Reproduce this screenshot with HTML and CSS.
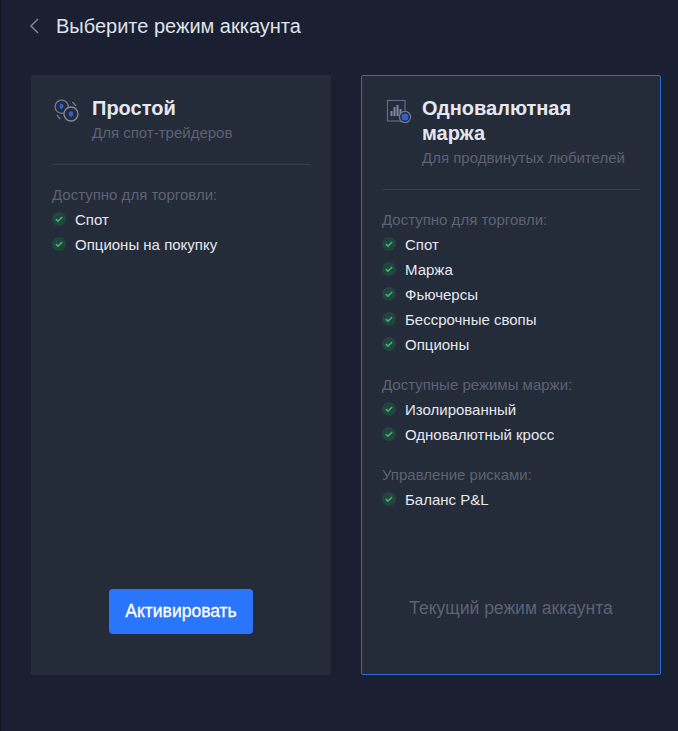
FILE: index.html
```html
<!DOCTYPE html>
<html lang="ru">
<head>
<meta charset="utf-8">
<title>Выберите режим аккаунта</title>
<link rel="stylesheet" href="styles.css">
</head>
<body>
<div class="page">
  <header class="top">
    <svg class="back" width="12" height="18" viewBox="0 0 12 18"><path d="M10 2 L3 9 L10 16" fill="none" stroke="#7d8493" stroke-width="1.5"/></svg>
    <h1 class="title">Выберите режим аккаунта</h1>
  </header>
  <main class="cards">
    <section class="card">
      <div class="head">
        <svg class="icon" width="28" height="26" viewBox="0 0 28 26" fill="none">
          <circle cx="7.7" cy="9.7" r="6.6" stroke="#6f7a98" stroke-width="1.3"/>
          <circle cx="17" cy="17" r="7" fill="#252c3a" stroke="#7f8aa8" stroke-width="1.3"/>
          <ellipse cx="7.5" cy="9.2" rx="1.9" ry="2.8" fill="#2f5fd0"/>
          <ellipse cx="17" cy="17" rx="2.2" ry="2.8" fill="#2f5fd0"/>
          <path d="M18.5 5 L22 9 M3 18 L6 22" stroke="#6f7a98" stroke-width="1.3"/>
        </svg>
        <div class="head-text">
          <h2 class="name">Простой</h2>
          <p class="desc">Для спот-трейдеров</p>
        </div>
      </div>
      <div class="body">
        <div class="group">
          <p class="label">Доступно для торговли:</p>
          <ul class="list">
            <li class="item"><svg class="check" width="14" height="14" viewBox="0 0 14 14"><circle cx="7" cy="7" r="7" fill="#23443f"/><path d="M3.8 7.1 L6 9.1 L10.2 5" fill="none" stroke="#3ab86e" stroke-width="1.5"/></svg>Спот</li>
            <li class="item"><svg class="check" width="14" height="14" viewBox="0 0 14 14"><circle cx="7" cy="7" r="7" fill="#23443f"/><path d="M3.8 7.1 L6 9.1 L10.2 5" fill="none" stroke="#3ab86e" stroke-width="1.5"/></svg>Опционы на покупку</li>
          </ul>
        </div>
      </div>
      <div class="foot"><button class="btn">Активировать</button></div>
    </section>
    <section class="card active">
      <div class="head">
        <svg class="icon" width="28" height="26" viewBox="0 0 28 26" fill="none">
          <rect x="3.5" y="3.5" width="17.5" height="20.5" stroke="#5f6a88" stroke-width="1.2"/>
          <path d="M7.5 14v5M10.5 10v9M13.5 8v11M16.5 12v7" stroke="#7f889f" stroke-width="2"/>
          <circle cx="21" cy="20" r="5.6" fill="#252c3a" stroke="#6f7a98" stroke-width="1.2"/>
          <circle cx="21" cy="20" r="3.5" fill="#2f5fd0"/>
        </svg>
        <div class="head-text">
          <h2 class="name">Одновалютная маржа</h2>
          <p class="desc">Для продвинутых любителей</p>
        </div>
      </div>
      <div class="body">
        <div class="group">
          <p class="label">Доступно для торговли:</p>
          <ul class="list">
            <li class="item"><svg class="check" width="14" height="14" viewBox="0 0 14 14"><circle cx="7" cy="7" r="7" fill="#23443f"/><path d="M3.8 7.1 L6 9.1 L10.2 5" fill="none" stroke="#3ab86e" stroke-width="1.5"/></svg>Спот</li>
            <li class="item"><svg class="check" width="14" height="14" viewBox="0 0 14 14"><circle cx="7" cy="7" r="7" fill="#23443f"/><path d="M3.8 7.1 L6 9.1 L10.2 5" fill="none" stroke="#3ab86e" stroke-width="1.5"/></svg>Маржа</li>
            <li class="item"><svg class="check" width="14" height="14" viewBox="0 0 14 14"><circle cx="7" cy="7" r="7" fill="#23443f"/><path d="M3.8 7.1 L6 9.1 L10.2 5" fill="none" stroke="#3ab86e" stroke-width="1.5"/></svg>Фьючерсы</li>
            <li class="item"><svg class="check" width="14" height="14" viewBox="0 0 14 14"><circle cx="7" cy="7" r="7" fill="#23443f"/><path d="M3.8 7.1 L6 9.1 L10.2 5" fill="none" stroke="#3ab86e" stroke-width="1.5"/></svg>Бессрочные свопы</li>
            <li class="item"><svg class="check" width="14" height="14" viewBox="0 0 14 14"><circle cx="7" cy="7" r="7" fill="#23443f"/><path d="M3.8 7.1 L6 9.1 L10.2 5" fill="none" stroke="#3ab86e" stroke-width="1.5"/></svg>Опционы</li>
          </ul>
        </div>
        <div class="group">
          <p class="label">Доступные режимы маржи:</p>
          <ul class="list">
            <li class="item"><svg class="check" width="14" height="14" viewBox="0 0 14 14"><circle cx="7" cy="7" r="7" fill="#23443f"/><path d="M3.8 7.1 L6 9.1 L10.2 5" fill="none" stroke="#3ab86e" stroke-width="1.5"/></svg>Изолированный</li>
            <li class="item"><svg class="check" width="14" height="14" viewBox="0 0 14 14"><circle cx="7" cy="7" r="7" fill="#23443f"/><path d="M3.8 7.1 L6 9.1 L10.2 5" fill="none" stroke="#3ab86e" stroke-width="1.5"/></svg>Одновалютный кросс</li>
          </ul>
        </div>
        <div class="group">
          <p class="label">Управление рисками:</p>
          <ul class="list">
            <li class="item"><svg class="check" width="14" height="14" viewBox="0 0 14 14"><circle cx="7" cy="7" r="7" fill="#23443f"/><path d="M3.8 7.1 L6 9.1 L10.2 5" fill="none" stroke="#3ab86e" stroke-width="1.5"/></svg>Баланс P&amp;L</li>
          </ul>
        </div>
      </div>
      <div class="foot"><span class="current">Текущий режим аккаунта</span></div>
    </section>
  </main>
</div>
</body>
</html>
```
FILE: styles.css
```css
* { box-sizing: border-box; }
html, body { margin: 0; height: 100%; }
body {
  background: #1a2031;
  font-family: "Liberation Sans", Arial, sans-serif;
  color: #e6e8ee;
}
.page { width: 678px; height: 731px; padding: 0 17px 0 30px; border-left: 1px solid #151823; overflow: hidden; }
.top { height: 75px; padding-bottom: 23px; display: flex; align-items: center; margin-left: -3px; gap: 16px; }
.back { flex: none; }
.title { margin: 0; font-size: 20px; line-height: 26px; font-weight: 400; color: #dfe2e9; white-space: nowrap; }
.cards { display: flex; gap: 30px; }
.card {
  width: 300px;
  height: 600px;
  background: #242b39;
  border: 1px solid #242b39;
  border-radius: 2px;
  padding: 20px 20px 0;
  display: flex;
  flex-direction: column;
}
.card.active { border-color: #2a6ad8; }
.head { display: flex; gap: 10px; padding: 0 0 22px; border-bottom: 1px solid #363d4b; }
.icon { flex: none; margin: 1px 0 0 2px; }
.head-text { flex: 1; min-width: 0; padding-right: 12px; }
.name { margin: 0; font-size: 20px; line-height: 25px; font-weight: 700; color: #e6e8ee; }
.desc { margin: 3px 0 0; font-size: 15px; line-height: 18px; color: #5c6372; }
.body { flex: 1; padding-top: 18px; }
.group { margin-bottom: 16px; }
.label { margin: 0; font-size: 15px; line-height: 24px; color: #5c6372; }
.list { list-style: none; margin: 0; padding: 0; }
.item { display: flex; align-items: center; gap: 9px; height: 25px; font-size: 15px; color: #e6e8ee; }
.check { flex: none; margin-top: -2px; }
.foot { height: 85px; display: flex; justify-content: center; align-items: flex-start; }
.btn {
  width: 144px;
  height: 45px;
  margin: 0;
  border: 0;
  border-radius: 4px;
  background: #2a75fb;
  color: #fff;
  -webkit-text-stroke: 0.3px #fff;
  font: 400 17.5px "Liberation Sans", Arial, sans-serif;
}
.current { margin-top: 7px; font-size: 17.5px; line-height: 24px; color: #5c6372; }
```
